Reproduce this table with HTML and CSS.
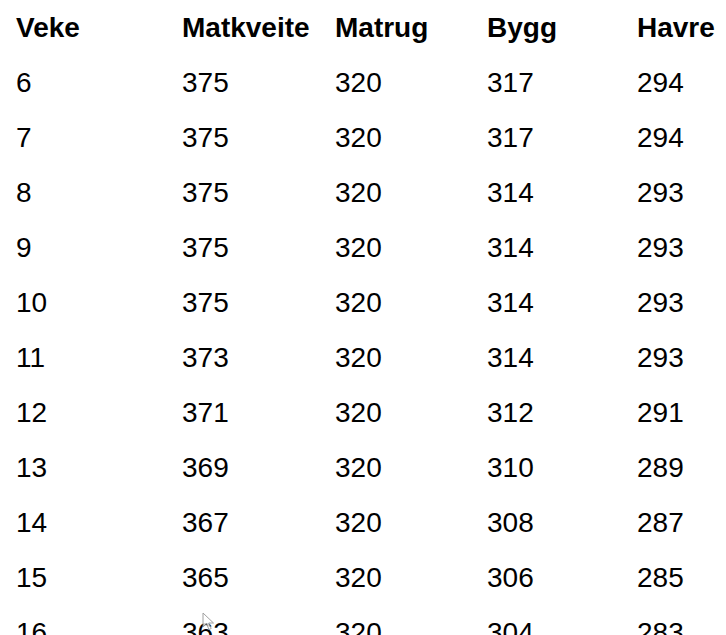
FILE: index.html
```html
<!DOCTYPE html>
<html lang="nn">
<head>
<meta charset="utf-8">
<title>Prisar</title>
<link rel="stylesheet" href="styles.css">
</head>
<body>
<div class="table">
  <div class="row head"><span>Veke</span><span>Matkveite</span><span>Matrug</span><span>Bygg</span><span>Havre</span></div>
  <div class="row"><span>6</span><span>375</span><span>320</span><span>317</span><span>294</span></div>
  <div class="row"><span>7</span><span>375</span><span>320</span><span>317</span><span>294</span></div>
  <div class="row"><span>8</span><span>375</span><span>320</span><span>314</span><span>293</span></div>
  <div class="row"><span>9</span><span>375</span><span>320</span><span>314</span><span>293</span></div>
  <div class="row"><span>10</span><span>375</span><span>320</span><span>314</span><span>293</span></div>
  <div class="row"><span>11</span><span>373</span><span>320</span><span>314</span><span>293</span></div>
  <div class="row"><span>12</span><span>371</span><span>320</span><span>312</span><span>291</span></div>
  <div class="row"><span>13</span><span>369</span><span>320</span><span>310</span><span>289</span></div>
  <div class="row"><span>14</span><span>367</span><span>320</span><span>308</span><span>287</span></div>
  <div class="row"><span>15</span><span>365</span><span>320</span><span>306</span><span>285</span></div>
  <div class="row"><span>16</span><span>363</span><span>320</span><span>304</span><span>283</span></div>
  <div class="row"><span>17</span><span>361</span><span>320</span><span>302</span><span>281</span></div>
</div>
<svg class="cursor" width="14" height="20" viewBox="0 0 14 20">
  <path d="M1 1 L1 15 L4.5 11.8 L7 17.5 L9.2 16.5 L6.8 11 L11.5 11 Z" fill="#fff" stroke="#888" stroke-width="1"/>
</svg>
</body>
</html>
```
FILE: styles.css
```css
html, body {
  margin: 0;
  padding: 0;
  background: #fff;
}
body {
  font-family: "Liberation Sans", Arial, sans-serif;
  font-size: 28px;
  color: #000;
  overflow: hidden;
}
.table {
  padding-left: 16px;
}
.row {
  display: grid;
  grid-template-columns: 166px 153px 152px 150px auto;
  height: 55px;
  line-height: 55px;
  white-space: nowrap;
}
.head {
  font-weight: bold;
}
.cursor {
  position: fixed;
  left: 202px;
  top: 612px;
  opacity: 0.8;
}
```
